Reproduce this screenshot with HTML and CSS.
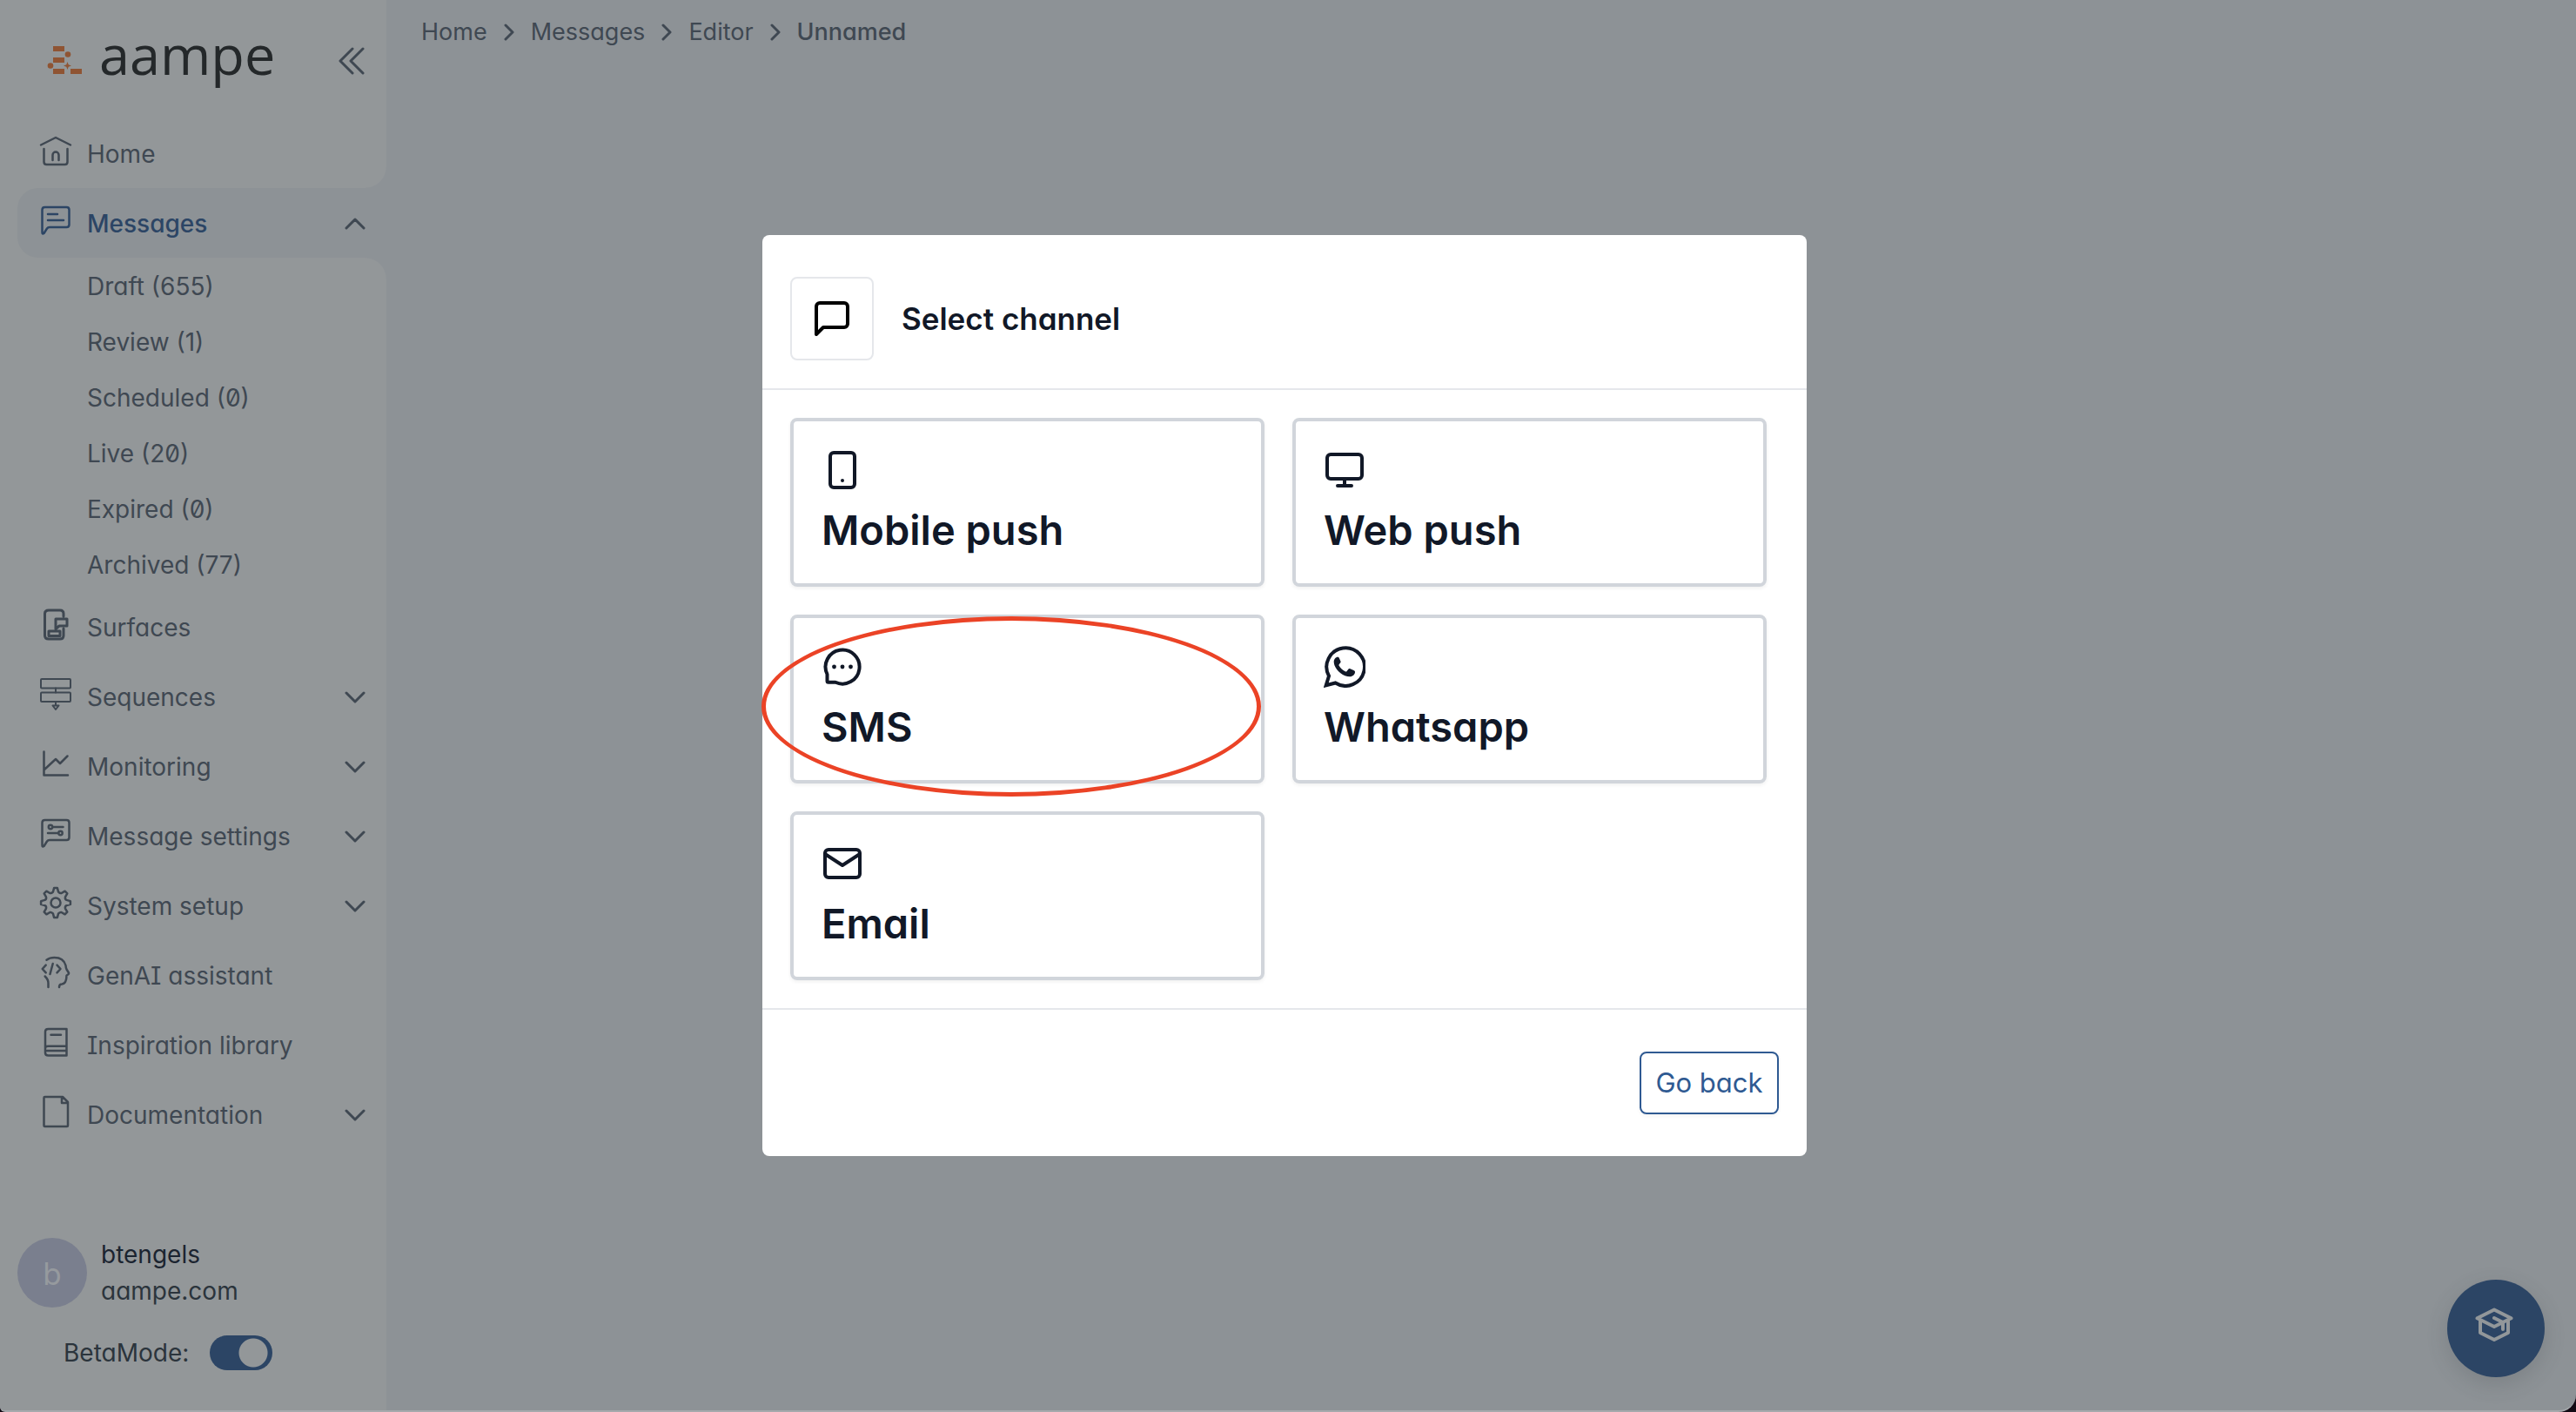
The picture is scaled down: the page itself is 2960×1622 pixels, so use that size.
FILE: index.html
```html
<!DOCTYPE html>
<html lang="en">
<head>
<meta charset="utf-8">
<title>aampe – Select channel</title>
<link rel="stylesheet" href="styles.css">
</head>
<body>
<div class="app">
  <aside class="sidebar">
    <header class="brand">
      <svg class="brand-mark" viewBox="0 0 42 36" aria-hidden="true">
        <path d="M7 1h13v6H7zM7 14h13v6H7zM7 27h13v6H7zM27 27h13v6H27z"/>
        <circle cx="24" cy="10.500" r="3.300"/><circle cx="4" cy="23.500" r="3.300"/>
        <path d="M23.500 19l1.200 3.300 3.300 1.200-3.300 1.200-1.200 3.300-1.200-3.300-3.300-1.200 3.300-1.200z"/>
      </svg>
      <span class="brand-name">aampe</span>
      <button class="collapse" type="button" aria-label="Collapse sidebar">
        <svg viewBox="0 0 32 32"><path d="M17 2L3 16l14 14M29 2L15 16l14 14"/></svg>
      </button>
    </header>

    <nav class="nav" aria-label="Main">
      <a class="item" href="#home">
        <svg class="icon" viewBox="0 0 40 40"><path d="M3 13.500L20 5l17 8.500M6.500 18v15q0 3 3 3h21q3 0 3-3V18M16.500 31v-6a3.500 3.500 0 0 1 7 0v6"/></svg>
        <span>Home</span>
      </a>
      <button class="item active" type="button" aria-expanded="true">
        <svg class="icon" viewBox="0 0 40 40"><path d="M7.500 5h25q3 0 3 3v17q0 3-3 3H13q-2 0-3 1.500L6.500 35q-2 1.500-2-1V8q0-3 3-3zM11 13h11M11 20h18"/></svg>
        <span>Messages</span>
        <svg class="chevron" viewBox="0 0 24 24"><path d="M2 17L12 7l10 10"/></svg>
      </button>
      <a class="subitem" href="#draft">Draft (655)</a>
      <a class="subitem" href="#review">Review (1)</a>
      <a class="subitem" href="#scheduled">Scheduled (0)</a>
      <a class="subitem" href="#live">Live (20)</a>
      <a class="subitem" href="#expired">Expired (0)</a>
      <a class="subitem" href="#archived">Archived (77)</a>
      <a class="item" href="#surfaces">
        <svg class="icon bold" viewBox="0 0 40 40"><path d="M29 11V8q0-4-4-4H12Q7.500 4 7.500 8v25q0 4 4.500 4h13q4 0 4-4v-8M20 14h13v8h-9l-4 3.500zM12 28h13v5.500H12z"/></svg>
        <span>Surfaces</span>
      </a>
      <button class="item" type="button" aria-expanded="false">
        <svg class="icon thin" viewBox="0 0 40 40"><rect x="3" y="3" width="34" height="10.500" rx="1"/><rect x="3" y="18.500" width="34" height="10.500" rx="1"/><path d="M20 13.500v5M20 29v4M16.500 33.500h7L20 38z"/></svg>
        <span>Sequences</span>
        <svg class="chevron" viewBox="0 0 24 24"><path d="M2 7l10 10L22 7"/></svg>
      </button>
      <button class="item" type="button" aria-expanded="false">
        <svg class="icon" viewBox="0 0 40 40"><path d="M6.500 6.500v27H34M7 27l13-12 5 5 8.500-8.500"/></svg>
        <span>Monitoring</span>
        <svg class="chevron" viewBox="0 0 24 24"><path d="M2 7l10 10L22 7"/></svg>
      </button>
      <button class="item" type="button" aria-expanded="false">
        <svg class="icon" viewBox="0 0 40 40"><path d="M7.500 5h25q3 0 3 3v17q0 3-3 3H13q-2 0-3 1.500L6.500 35q-2 1.500-2-1V8q0-3 3-3zM16.500 13h12M11 20h12"/><circle cx="14" cy="13" r="2.200"/><circle cx="25.500" cy="20" r="2.200"/></svg>
        <span>Message settings</span>
        <svg class="chevron" viewBox="0 0 24 24"><path d="M2 7l10 10L22 7"/></svg>
      </button>
      <button class="item" type="button" aria-expanded="false">
        <svg class="icon" viewBox="0 0 40 40"><path d="M16.900 7.600L18.100 3.100H21.900L23.100 7.600Q25 9.500 26.600 9L30.600 6.700 33.300 9.400 31 13.400Q30.500 16 32.400 16.900L36.900 18.100V21.900L32.400 23.100Q30.500 24 31 26.600L33.300 30.600 30.600 33.300 26.600 31Q25 30.500 23.100 32.400L21.900 36.900H18.100L16.900 32.400Q15 30.500 13.400 31L9.400 33.300 6.700 30.600 9 26.600Q9.500 24 7.600 23.100L3.100 21.900V18.100L7.600 16.900Q9.500 16 9 13.400L6.700 9.400 9.400 6.700 13.400 9Q15 9.500 16.900 7.600z"/><circle cx="20" cy="20" r="5.500"/></svg>
        <span>System setup</span>
        <svg class="chevron" viewBox="0 0 24 24"><path d="M2 7l10 10L22 7"/></svg>
      </button>
      <a class="item" href="#genai">
        <svg class="icon" viewBox="0 0 40 40"><path d="M9.500 5.700Q13 3 18.500 3 29 3 31.500 12q.200 3 1 4.500l2.500 4q.500 1.500-2.500 3Q32.500 33 27 33.500q-3 0-3 3.500M7.700 24.500q4 4 3.800 8V37M8.700 11.700l-4 4.300 4 4.300M16.700 10l-3.200 12M21.500 11.700l4 4.300-4 4.300"/></svg>
        <span>GenAI assistant</span>
      </a>
      <a class="item" href="#library">
        <svg class="icon" viewBox="0 0 40 40"><path d="M32.500 5v30.500h-21q-3.500 0-3.500-3V8q0-3 3.500-3zM14.500 11.700H26M8 27q0-2.300 3.500-2.300h21M10 30h22.500"/></svg>
        <span>Inspiration library</span>
      </a>
      <button class="item" type="button" aria-expanded="false">
        <svg class="icon" viewBox="0 0 40 40"><path d="M7.500 3H28l6 6v27q0 1-1 1H7.500q-1 0-1-1V4q0-1 1-1zM27 3.500V10h6.500"/></svg>
        <span>Documentation</span>
        <svg class="chevron" viewBox="0 0 24 24"><path d="M2 7l10 10L22 7"/></svg>
      </button>
    </nav>

    <div class="account">
      <div class="avatar">b</div>
      <div class="who"><span class="user">btengels</span><span>aampe.com</span></div>
    </div>
    <div class="beta">
      <label for="beta">BetaMode:</label>
      <input class="toggle" id="beta" type="checkbox" role="switch" checked>
    </div>
  </aside>

  <main class="main">
    <nav class="crumbs" aria-label="Breadcrumb">
      <a href="#home">Home</a>
      <svg viewBox="0 0 12 20"><path d="M2 2l8 8-8 8"/></svg>
      <a href="#messages">Messages</a>
      <svg viewBox="0 0 12 20"><path d="M2 2l8 8-8 8"/></svg>
      <a href="#editor">Editor</a>
      <svg viewBox="0 0 12 20"><path d="M2 2l8 8-8 8"/></svg>
      <span class="current" aria-current="page">Unnamed</span>
    </nav>
  </main>
</div>

<button class="help" type="button" aria-label="Learning center">
  <svg viewBox="0 0 44 40"><path d="M22 2.500l19.500 9.800L22 22 2.500 12.300zM6 14.500V29l16 8 16-8V14.500M22 12l10 5v8"/></svg>
</button>

<div class="backdrop">
  <section class="modal" role="dialog" aria-modal="true" aria-labelledby="modal-title">
    <header class="modal-head">
      <div class="modal-icon">
        <svg class="glyph" viewBox="0 0 24 24"><path d="M21 15a2 2 0 0 1-2 2H7l-4 4V5a2 2 0 0 1 2-2h14a2 2 0 0 1 2 2z"/></svg>
      </div>
      <h1 id="modal-title">Select channel</h1>
    </header>
    <div class="channels">
      <button class="channel" type="button">
        <svg class="glyph" viewBox="0 0 24 24"><rect x="5" y="2" width="14" height="20" rx="2"/><path d="M12 18h.01"/></svg>
        <span>Mobile push</span>
      </button>
      <button class="channel" type="button">
        <svg class="glyph" viewBox="0 0 24 24"><rect x="2" y="3" width="20" height="14" rx="2"/><path d="M8 21h8M12 17v4"/></svg>
        <span>Web push</span>
      </button>
      <button class="channel marked" type="button">
        <svg class="glyph sms" viewBox="0 0 48 48"><path d="M6.500 32.500A19.500 19.500 0 1 1 16 41.800H8q-1.500 0-1.500-1.500z"/><g class="fill"><circle cx="14.500" cy="24" r="2.400"/><circle cx="24" cy="24" r="2.400"/><circle cx="33.500" cy="24" r="2.400"/></g></svg>
        <span>SMS</span>
      </button>
      <button class="channel" type="button">
        <svg class="glyph whatsapp" viewBox="0 0 48 48"><path d="M6 34.500A21.800 21.800 0 1 1 13.500 42.500L2.700 45.300z"/><path class="fill" d="M16.200 12.700c-1.600-.300-4.500 2-4.500 5.300 0 8.500 9.800 17.300 18.300 17.300 3.300 0 6-2.600 6-5.300 0-1-.500-1.500-1.500-2l-4-1.800c-1-.400-1.600-.200-2.200.600l-1.700 2.100c-.500.600-1.100.700-1.900.300-3-1.400-5.400-3.600-7-6.500-.400-.700-.300-1.200.200-1.800l1.300-1.600c.400-.600.500-1.100.200-1.800l-1.700-3.800c-.300-.700-.700-1-1.500-1z"/></svg>
        <span>Whatsapp</span>
      </button>
      <button class="channel" type="button">
        <svg class="glyph" viewBox="0 0 24 24"><rect x="2" y="4" width="20" height="16" rx="2"/><path d="M22 6.500l-10 6.500L2 6.500"/></svg>
        <span>Email</span>
      </button>
    </div>
    <footer class="modal-foot"><button class="back" type="button">Go back</button></footer>
  </section>
</div>
</body>
</html>
```

FILE: styles.css
```css
:root {
  --side: #939799;
  --page: #8d9296;
  --text: #3f4852;
  --blue: #2c4565;
  --ink: #111827;
}

* { box-sizing: border-box; }

html { background: #120a14; }

body {
  margin: 0;
  font-family: Inter, "Liberation Sans", sans-serif;
  font-feature-settings: "cv11", "cv08", "zero";
  font-size: 28px;
  line-height: 42px;
  color: var(--text);
}

button, input { font: inherit; color: inherit; margin: 0; }
button { border: 0; background: none; padding: 0; text-align: left; font-feature-settings: inherit; cursor: pointer; }
a { color: inherit; text-decoration: none; }
svg { display: block; flex: none; fill: none; stroke: currentColor; stroke-width: 2; stroke-linecap: round; stroke-linejoin: round; }

.app {
  display: flex;
  min-height: 100vh;
  background: var(--page);
  border-bottom: 2px solid #a5a9ac;
  border-radius: 0 0 20px 6px;
  overflow: hidden;
}

/* Sidebar */
.sidebar {
  display: flex;
  flex-direction: column;
  flex: none;
  width: 444px;
  padding: 0 0 46px 20px;
  background: var(--side);
}

.brand { display: flex; align-items: center; height: 136px; padding: 4px 24px 0 34px; }
.brand-mark { width: 42px; height: 36px; fill: #8f5433; stroke: none; }
.brand-name { margin: 0 auto 16px 18px; font-family: "Open Sans", sans-serif; font-size: 63px; font-weight: 500; line-height: 80px; color: #24282a; }
.collapse svg { width: 32px; height: 32px; stroke-width: 3; }

.nav { display: flex; flex-direction: column; }
.item { display: flex; align-items: center; gap: 16px; height: 80px; padding: 2px 24px 0; }
.icon { width: 40px; height: 40px; margin-bottom: 8px; stroke-width: 2.5; }
.icon.bold { stroke-width: 3; }
.icon.thin { stroke-width: 2; }
.chevron { width: 24px; height: 24px; margin-left: auto; stroke-width: 3; color: var(--text); }
.subitem { height: 64px; padding-left: 80px; line-height: 66px; }

.active {
  position: relative;
  background: var(--page);
  border-radius: 24px 0 0 24px;
  font-weight: 500;
  color: var(--blue);
}
/* Inverted corners that join the active item to the page */
.active::before, .active::after {
  content: "";
  position: absolute;
  right: 0;
  width: 24px;
  height: 24px;
}
.active::before { bottom: 100%; background: radial-gradient(circle at 0 0, transparent 23px, var(--page) 24px); }
.active::after { top: 100%; background: radial-gradient(circle at 0 100%, transparent 23px, var(--page) 24px); }

.account { display: flex; align-items: center; gap: 16px; margin-top: auto; color: #2b343c; }
.avatar {
  width: 80px;
  height: 80px;
  border-radius: 50%;
  background: #7a7f8e;
  color: #969a9e;
  font-size: 35px;
  line-height: 82px;
  text-align: center;
}
.who { display: flex; flex-direction: column; }
.user { color: #1b2430; }
.beta { display: flex; align-items: center; gap: 24px; margin-top: 30px; padding-left: 53px; height: 40px; color: #2b343c; }
.toggle {
  appearance: none;
  width: 72px;
  height: 40px;
  border-radius: 20px;
  background: radial-gradient(circle at 50px 20px, var(--side) 16px, transparent 17px) var(--blue);
}
.toggle:not(:checked) { background: radial-gradient(circle at 20px 20px, var(--side) 16px, transparent 17px) var(--text); }

/* Page */
.main { flex: 1; min-width: 0; }
.crumbs { display: flex; align-items: center; gap: 19px; padding: 16px 40px; font-size: 27px; }
.crumbs svg { width: 12px; height: 20px; stroke-width: 3; }
.current { font-weight: 500; }

.help {
  position: fixed;
  right: 36px;
  bottom: 40px;
  display: grid;
  place-items: center;
  width: 112px;
  height: 112px;
  padding: 0 4px 8px 0;
  border-radius: 50%;
  background: var(--blue);
  color: #92979a;
  box-shadow: 0 8px 24px rgba(60, 66, 72, 0.2);
}
.help svg { width: 44px; height: 40px; stroke-width: 4; }

/* Dialog */
.backdrop {
  position: fixed;
  inset: 0;
  display: grid;
  place-items: center;
  padding: 0 8px 24px 0;
}
.modal { width: 1200px; max-width: 100%; border-radius: 8px; background: #fff; color: var(--ink); }
.modal-head { display: flex; align-items: center; gap: 32px; padding: 48px 32px 32px; border-bottom: 2px solid #e5e7eb; }
.modal-head h1 { margin: 0; font-size: 35px; line-height: 56px; font-weight: 600; }
.modal-icon { display: grid; place-items: center; width: 96px; height: 96px; border: 2px solid #e5e7eb; border-radius: 8px; color: #000; }
.glyph { width: 48px; height: 48px; }
.glyph .fill { fill: currentColor; stroke: none; }
.sms { stroke-width: 4; }
.whatsapp { stroke-width: 4; stroke-linejoin: miter; }

.channels { display: grid; grid-template-columns: 1fr 1fr; gap: 32px; padding: 32px 46px 32px 32px; }
.channel {
  position: relative;
  display: flex;
  flex-direction: column;
  gap: 16px;
  padding: 32px;
  border: 4px solid #d1d5db;
  border-radius: 8px;
  box-shadow: 0 2px 4px rgba(0, 0, 0, 0.06);
  font-size: 47px;
  line-height: 58px;
  font-weight: 600;
}
/* Hand-drawn highlight over the card */
.marked::after {
  content: "";
  position: absolute;
  inset: -2px 0 -19px -37px;
  border: 5px solid #eb4326;
  border-radius: 50%;
}

.modal-foot { display: flex; justify-content: flex-end; padding: 48px 32px; border-top: 2px solid #e5e7eb; }
.back {
  width: 160px;
  height: 72px;
  border: 2px solid #2f5a92;
  border-radius: 8px;
  box-shadow: 0 2px 4px rgba(0, 0, 0, 0.05);
  color: #2f5a92;
  font-size: 31px;
  text-align: center;
}
```
